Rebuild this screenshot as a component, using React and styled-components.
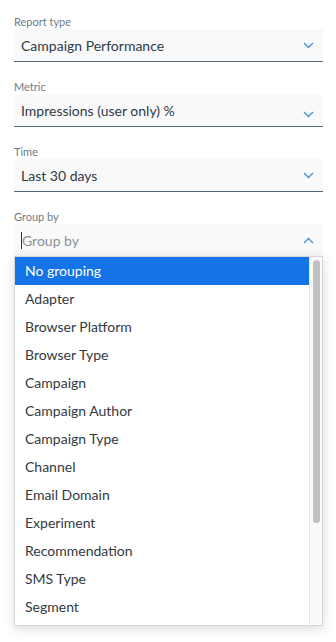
import styled, {createGlobalStyle} from "styled-components"

const Global = createGlobalStyle`
    body {
        margin: 0;
        background: #ffffff;
        font-family: Lato, "Open Sans", sans-serif;
    }
`

const Page = styled.div`
    width: 336px;
    height: 642px;
    padding: 15px 13px 0 14px;
    box-sizing: border-box;
    overflow: hidden;
`

const Field = styled.div`
    margin-bottom: 18px;
    position: relative;
`

const Label = styled.div`
    font-size: 11px;
    line-height: 14px;
    color: #6f7b88;
`

const Select = styled.div`
    height: 32px;
    background: #f9f9f9;
    border-bottom: 1px solid ${({open}) => open ? "#c9cccf" : "#56677a"};
    display: flex;
    align-items: center;
    justify-content: space-between;
    padding: 0 9px 0 7px;
`

const Value = styled.span`
    font-size: 14px;
    color: ${({placeholder}) => placeholder ? "#8d9298" : "#2f3b48"};
    display: flex;
    align-items: center;
`

const Caret = styled.span`
    width: 1px;
    height: 17px;
    background: #2b3440;
`

const Chevron = styled.svg`
    width: 11px;
    height: 7px;
    margin-top: ${({drop}) => drop || 0}px;
`

const List = styled.div`
    position: absolute;
    top: 46px;
    left: 0;
    right: 0;
    height: 368px;
    background: #fff;
    border: 1px solid #d6d6d6;
    box-shadow: 0 3px 10px rgba(0, 0, 0, 0.14);
    display: flex;
    z-index: 2;
`

const Options = styled.div`
    flex: 1;
    overflow: hidden;
`

const Track = styled.div`
    width: 13px;
    background: #fafafa;
    border-left: 1px solid #e6e6e6;
    padding: 3px 2px 0 3px;
    box-sizing: border-box;
`

const Thumb = styled.div`
    height: 263px;
    background: #c1c1c1;
    border-radius: 4px;
`

const Option = styled.div`
    height: 28px;
    line-height: 28px;
    padding-left: 10px;
    font-size: 14px;
    color: ${({active}) => active ? "#ffffff" : "#333a42"};
    background: ${({active}) => active ? "#1473e6" : "transparent"};
    white-space: nowrap;
`

const Down = ({drop}) => (
    <Chevron drop={drop} viewBox="0 0 11 7">
        <path d="M1 1l4.5 4.5L10 1" fill="none" stroke="#4a90d9" strokeWidth="1.4" />
    </Chevron>
)

const Up = () => (
    <Chevron viewBox="0 0 11 7">
        <path d="M1 6l4.5-4.5L10 6" fill="none" stroke="#4a90d9" strokeWidth="1.4" />
    </Chevron>
)

const options = [
    "No grouping", "Adapter", "Browser Platform", "Browser Type", "Campaign",
    "Campaign Author", "Campaign Type", "Channel", "Email Domain", "Experiment",
    "Recommendation", "SMS Type", "Segment"
]

export default function App() {
    return (
        <Page>
            <Global />
            <Field>
                <Label>Report type</Label>
                <Select>
                    <Value>Campaign Performance</Value>
                    <Down />
                </Select>
            </Field>
            <Field>
                <Label>Metric</Label>
                <Select>
                    <Value>Impressions (user only) %</Value>
                    <Down drop={9} />
                </Select>
            </Field>
            <Field>
                <Label>Time</Label>
                <Select>
                    <Value>Last 30 days</Value>
                    <Down />
                </Select>
            </Field>
            <Field>
                <Label>Group by</Label>
                <Select open>
                    <Value placeholder><Caret />Group by</Value>
                    <Up />
                </Select>
                <List>
                    <Options>
                        {options.map((o, i) => (
                            <Option key={o} active={i == 0}>{o}</Option>
                        ))}
                    </Options>
                    <Track>
                        <Thumb />
                    </Track>
                </List>
            </Field>
        </Page>
    )
}
